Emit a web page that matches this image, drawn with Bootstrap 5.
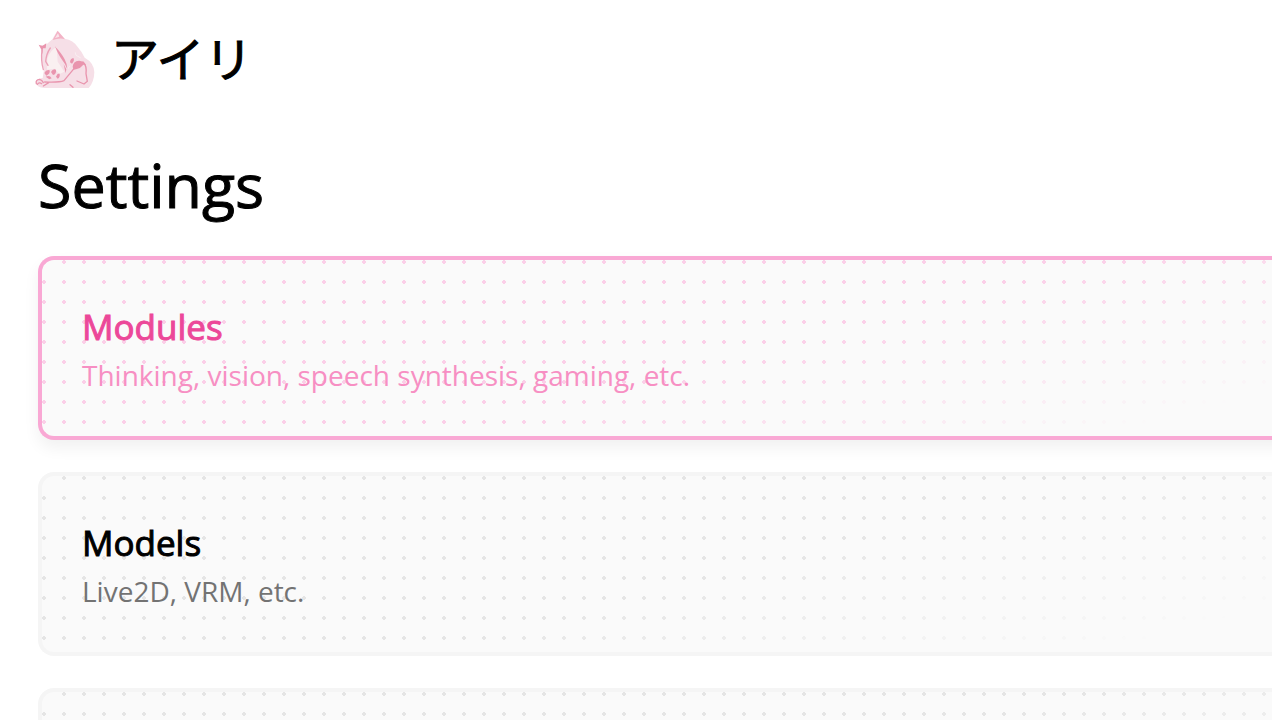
<!DOCTYPE html>
<html lang="en">
<head>
<meta charset="utf-8">
<meta name="viewport" content="width=device-width, initial-scale=1">
<title>アイリ – Settings</title>
<link href="https://cdn.jsdelivr.net/npm/bootstrap@5.3.0/dist/css/bootstrap.min.css" rel="stylesheet">
<style>
  body { font-family: "Open Sans", "Noto Sans CJK JP", sans-serif; color: #000; background: #fff; }
  .page { padding-left: 38px; overflow: hidden; }
  .brand { margin-left: -8px; padding-top: 24px; gap: 9px; }
  .brand svg { width: 72px; height: 70px; }
  .brand-name { font: 400 48px/64px "Noto Sans CJK JP", sans-serif; -webkit-text-stroke: 1px currentColor; }
  .page-title { font-size: 61px; line-height: 72px; font-weight: 400; margin: 55px 0 35px; -webkit-text-stroke: 1px currentColor; }
  .tile-list { gap: 32px; }
  .tile {
    --edge: #f5f5f5; --dot: #e5e5e5; --title: #000; --desc: #737373;
    position: relative; height: 184px; padding: 6px 40px 0;
    border: 4px solid var(--edge); border-right: 0; border-radius: 16px 0 0 16px;
    background: #fafafa;
  }
  .tile::before {
    content: ""; position: absolute; inset: 0; border-radius: 12px 0 0 12px;
    background: radial-gradient(circle at 10px 10px, var(--dot) 2px, transparent 2px) -8px -8px / 20px 20px;
    -webkit-mask-image: linear-gradient(165deg, #000 268px, transparent 446px);
    mask-image: linear-gradient(165deg, #000 268px, transparent 446px);
  }
  .tile.is-active {
    --edge: #f9a8d4; --dot: #fbcfe8; --title: #ec4899; --desc: #f78fc3;
    box-shadow: 0 8px 16px rgba(0, 0, 0, .06);
    margin-right: -24px;
  }
  .tile-title { position: relative; font-size: 35px; line-height: 48px; color: var(--title); -webkit-text-stroke: 1px currentColor; }
  .tile-desc { position: relative; font-size: 28px; line-height: 48px; color: var(--desc); }
</style>
</head>
<body>
<div class="page">
  <header class="d-flex">
    <a href="#" class="brand d-inline-flex align-items-start text-reset text-decoration-none">
      <svg viewBox="0 0 216 210" aria-hidden="true" fill="none" stroke-linecap="round" stroke-linejoin="round">
        <path fill="#f6dfe7" d="M27 64 48 62 67 46 82 20 104 44Q130 48 143 69Q157 85 164 101Q192 116 193 145Q192 176 176 192H44Q18 190 17 173Q18 164 38 162L42 137Q31 103 35 80Z"/>
        <path fill="#faf0f1" d="M52 104Q62 77 80 69L83 113 103 143 87 151 75 134 51 137Z"/>
        <path fill="#f3b3c6" d="M68 48 83 20 105 46Q91 40 68 48Z"/>
        <path fill="#f9e5eb" d="M75 42 84 28 88 38Z"/>
        <path fill="#ea95ae" d="M26 62 37 66 49 58 47 73 39 73 37 91 34 76ZM75 67Q96 90 104 106Q112 121 112 136Q105 117 94 104Q84 91 75 67ZM101 121 109 136 107 148Z"/>
        <path stroke="#eba2b8" stroke-width="4" d="M36 78Q32 109 40 137M61 72Q49 89 47 112L54 124"/>
        <path stroke="#f9eef1" stroke-width="3" d="M136 86 138 94 151 101M119 126 114 134"/>
        <path fill="#e995ae" d="M128 129Q129 111 147 110Q163 111 168 124L160 122Q152 133 138 136L131 137Z"/>
        <path stroke="#e995ae" stroke-width="4" d="M135 130 102 170Q88 176 44 174M40 186 56 176M159 114Q171 125 168 149L172 172 162 180 141 171M120 182 129 190"/>
        <path fill="#e995ae" d="M120 115Q121 103 130 102Q135 108 126 119ZM43 147Q48 136 59 139Q61 150 49 155ZM63 144Q69 132 78 137Q80 150 69 153ZM78 158Q82 147 89 149Q91 160 83 164ZM47 158Q59 152 65 163L58 166Z"/>
        <path fill="#f6dfe7" stroke="#e995ae" stroke-width="4" d="M19 179Q16 167 29 166 36 168 40 176M22 181Q28 173 35 179"/>
      </svg>
      <span class="brand-name" lang="ja">アイリ</span>
    </a>
  </header>
  <main>
    <h1 class="page-title">Settings</h1>
    <nav class="tile-list d-flex flex-column" aria-label="Settings sections">
      <a href="#modules" class="tile is-active d-flex flex-column justify-content-center text-decoration-none">
        <span class="tile-title">Modules</span>
        <span class="tile-desc">Thinking, vision, speech synthesis, gaming, etc.</span>
      </a>
      <a href="#models" class="tile d-flex flex-column justify-content-center text-decoration-none">
        <span class="tile-title">Models</span>
        <span class="tile-desc">Live2D, VRM, etc.</span>
      </a>
      <a href="#more" class="tile d-block" aria-label="More settings"></a>
    </nav>
  </main>
</div>
<script src="https://cdn.jsdelivr.net/npm/bootstrap@5.3.0/dist/js/bootstrap.bundle.min.js"></script>
</body>
</html>
